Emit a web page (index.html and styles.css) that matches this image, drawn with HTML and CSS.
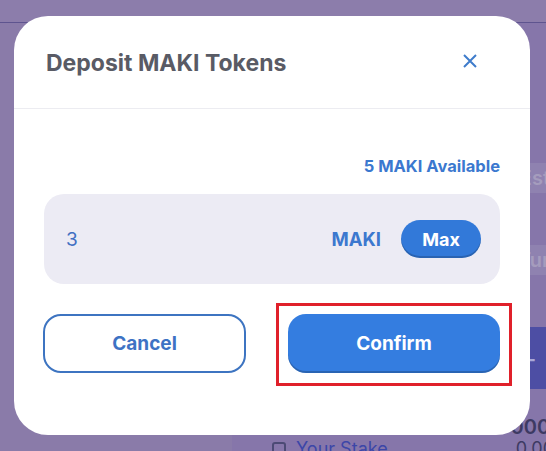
FILE: index.html
```html
<!DOCTYPE html>
<html>
<head>
<meta charset="utf-8">
<link rel="stylesheet" href="styles.css">
</head>
<body>
<div class="page">
  <div class="topbar"></div>
  <div class="main">
    <div class="side"></div>
    <div class="card">
      <div class="field f1"><span>Est</span></div>
      <div class="field f2"><span>Tur</span></div>
      <div class="plus">+</div>
      <div class="val">000.</div>
      <div class="stake"><span class="ico"></span><span class="stake-t">Your Stake</span><span class="stake-v">0.00</span></div>
    </div>
  </div>
</div>

<div class="modal">
  <div class="modal-head">
    <h2 class="title">Deposit MAKI Tokens</h2>
    <button class="close" aria-label="close">
      <svg width="14" height="14" viewBox="0 0 14 14"><path d="M1 1L13 13M13 1L1 13" stroke="#3f7ccb" stroke-width="2" fill="none"/></svg>
    </button>
  </div>
  <div class="modal-body">
    <div class="avail">5 MAKI Available</div>
    <div class="input-box">
      <span class="amount">3</span>
      <span class="unit">MAKI</span>
      <button class="max">Max</button>
    </div>
    <div class="actions">
      <button class="btn cancel">Cancel</button>
      <div class="confirm-wrap">
        <button class="btn confirm">Confirm</button>
        <div class="highlight"></div>
      </div>
    </div>
  </div>
</div>
</body>
</html>
```

FILE: styles.css
```css
* { box-sizing: border-box; }
html, body { margin: 0; padding: 0; }
body {
  width: 546px;
  height: 451px;
  overflow: hidden;
  background: #8c7dab;
  font-family: Inter, "Noto Sans", sans-serif;
  position: relative;
}
.page { height: 451px; }
.topbar { height: 23px; border-bottom: 1px solid #5e548f; }
.main { display: grid; grid-template-columns: 232px 1fr; height: 428px; }
.side { background: #8a7ba9; }
.card {
  background: #8676aa;
  padding: 140px 0 0 40px;
  display: flex;
  flex-direction: column;
  align-items: flex-end;
}
.field {
  width: 100%;
  height: 30px;
  background: #8f82b0;
  color: #a59cbd;
  font-size: 20px;
  font-weight: 600;
  display: flex;
  align-items: center;
  justify-content: flex-end;
  overflow: hidden;
  white-space: nowrap;
}
.field span { margin-right: -4px; }
.f1 { margin-bottom: 52px; }
.f2 { margin-bottom: 52px; }
.plus {
  width: 40px;
  height: 62px;
  background: #4d4ea4;
  color: #a9a8d8;
  font-size: 28px;
  display: flex;
  align-items: center;
  justify-content: center;
  margin-right: -2px;
}
.val {
  margin-top: 28px;
  color: #3d3a63;
  font-size: 20px;
  font-weight: 600;
  margin-right: -10px;
  line-height: 20px;
}
.stake {
  align-self: stretch;
  display: flex;
  align-items: center;
  margin-top: 2px;
  font-size: 18px;
  line-height: 20px;
  padding-left: 0;
}
.ico { width: 14px; height: 14px; border: 2px solid #4c4a75; border-radius: 3px; margin-right: 10px; }
.stake-t { color: #3c46a8; }
.stake-v { margin-left: auto; color: #3d3a63; margin-right: -8px; }

.modal {
  position: absolute;
  left: 14px;
  top: 16px;
  width: 516px;
  height: 419px;
  background: #fff;
  border-radius: 34px;
  display: flex;
  flex-direction: column;
}
.modal-head {
  height: 93px;
  display: flex;
  align-items: center;
  justify-content: space-between;
  padding: 0 40px 0 32px;
  border-bottom: 1px solid #ececf1;
}
.title {
  margin: 0;
  font-size: 23px;
  font-weight: 700;
  color: #595b65;
  letter-spacing: 0;
  padding-top: 2px;
}
.close {
  width: 40px;
  height: 40px;
  border: 0;
  background: transparent;
  padding: 0;
  display: flex;
  align-items: center;
  justify-content: center;
  margin-top: -2px;
}
.modal-body { padding: 47px 30px 0 30px; display: flex; flex-direction: column; }
.avail {
  text-align: right;
  font-size: 16.5px;
  font-weight: 700;
  color: #3b78cf;
  line-height: 20px;
}
.input-box {
  margin-top: 18px;
  height: 90px;
  background: #ecebf4;
  border-radius: 20px;
  display: flex;
  align-items: center;
  padding: 0 19px 0 22px;
}
.amount { font-size: 19px; color: #3f6fc2; flex: 1; }
.unit { font-size: 18.5px; font-weight: 700; color: #3c78cf; margin-right: 20px; }
.max {
  width: 80px;
  height: 38px;
  border: 0;
  border-radius: 19px;
  background: #3279d9;
  box-shadow: inset 0 -2px 0 rgba(0,0,0,0.18);
  color: #fff;
  font-family: inherit;
  font-size: 18px;
  font-weight: 700;
}
.actions {
  margin-top: 30px;
  display: grid;
  grid-template-columns: 203px 212px;
  justify-content: space-between;
  margin-left: -1px;
}
.btn {
  height: 59px;
  border-radius: 18px;
  font-family: inherit;
  font-size: 19px;
  font-weight: 700;
  width: 100%;
}
.cancel {
  background: #fff;
  border: 2px solid #3d74c1;
  color: #3d72c4;
}
.confirm-wrap { position: relative; }
.confirm {
  border: 0;
  background: #347de0;
  box-shadow: inset 0 -2px 0 rgba(0,0,0,0.2);
  color: #fff;
  display: block;
}
.highlight {
  position: absolute;
  left: -12px;
  right: -12px;
  top: -11px;
  bottom: -13px;
  border: 3px solid #e0202a;
  pointer-events: none;
}
```
